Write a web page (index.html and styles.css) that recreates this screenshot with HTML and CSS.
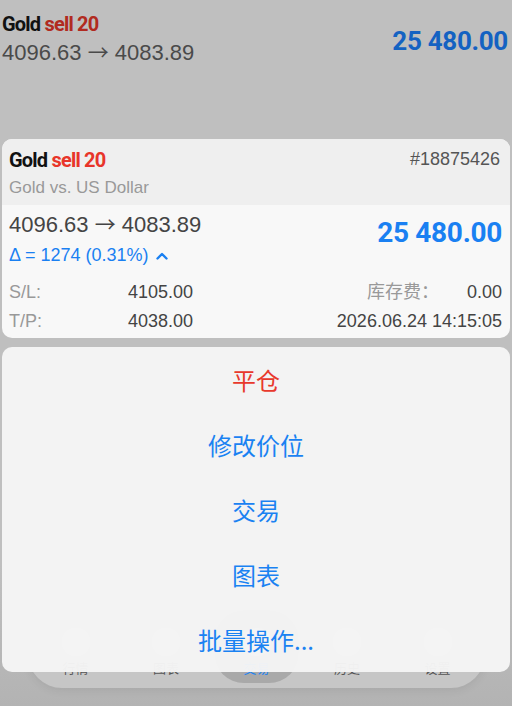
FILE: index.html
```html
<!DOCTYPE html>
<html lang="zh">
<head>
    <meta charset="UTF-8">
    <meta name="viewport" content="width=device-width, initial-scale=1.0">
    <title>Gold sell 20</title>
    <link rel="stylesheet" href="styles.css">
</head>
<body>

    <div class="screen">
        <!-- строка позиции под затемнением -->
        <div class="top-row">
            <div>
                <div class="symbol"><span class="sym-name">Gold</span> <span class="sell dim">sell 20</span></div>
                <div class="prices dim-text">4096.63 <span class="arrow">→</span> 4083.89</div>
            </div>
            <div class="profit top-profit">25 480.00</div>
        </div>

        <!-- выбранная позиция -->
        <div class="card">
            <div class="card-head">
                <div>
                    <div class="symbol"><span class="sym-name">Gold</span> <span class="sell">sell 20</span></div>
                    <div class="desc">Gold vs. US Dollar</div>
                </div>
                <div class="ticket">#18875426</div>
            </div>
            <div class="card-body">
                <div class="main-row">
                    <div>
                        <div class="prices">4096.63 <span class="arrow">→</span> 4083.89</div>
                        <div class="delta">Δ = 1274 (0.31%)
                            <svg class="chevron" width="12" height="8" viewBox="0 0 12 8"><path d="M1.5 6.5 L6 2 L10.5 6.5" fill="none" stroke="#1a80f2" stroke-width="2.4" stroke-linecap="round" stroke-linejoin="round"/></svg>
                        </div>
                    </div>
                    <div class="profit">25 480.00</div>
                </div>
                <div class="details">
                    <span class="label">S/L:</span>
                    <span class="value">4105.00</span>
                    <span class="label right">库存费：</span>
                    <span class="value right">0.00</span>
                    <span class="label">T/P:</span>
                    <span class="value">4038.00</span>
                    <span class="value right wide">2026.06.24 14:15:05</span>
                </div>
            </div>
        </div>

        <!-- меню действий -->
        <div class="sheet">
            <button class="action red">平仓</button>
            <button class="action">修改价位</button>
            <button class="action">交易</button>
            <button class="action">图表</button>
            <button class="action">批量操作...</button>
        </div>

        <!-- нижняя панель за меню -->
        <div class="tabbar">
            <div class="tab"><i></i><span>行情</span></div>
            <div class="tab"><i></i><span>图表</span></div>
            <div class="tab active"><i></i><span>交易</span></div>
            <div class="tab"><i></i><span>历史</span></div>
            <div class="tab"><i></i><span>设置</span></div>
        </div>
    </div>

</body>
</html>
```

FILE: styles.css
```css
body {
    margin: 0;
    padding: 0;
    font-family: "Liberation Sans", Arial, "Noto Sans CJK SC", sans-serif;
}
.screen {
    position: relative;
    width: 512px;
    height: 706px;
    overflow: hidden;
    background: linear-gradient(#bfbfbf 0%, #bfbfbf 80%, #b3b3b3 100%);
}
.top-row {
    display: flex;
    justify-content: space-between;
    padding: 12px 4px 0 2px;
    height: 127px;
    box-sizing: border-box;
}
.symbol {
    font-family: Roboto, sans-serif;
    font-weight: bold;
    font-size: 20px;
    letter-spacing: -0.8px;
    line-height: 24px;
    color: #111;
}
.sell {
    color: #e8352a;
}
.sell.dim {
    color: #b12a20;
}
.prices {
    font-size: 22px;
    line-height: 30px;
    color: #444;
}
.arrow {
    font-family: "Noto Sans CJK SC", sans-serif;
    font-size: 21px;
    line-height: 20px;
}
.dim-text {
    color: #4a4a4a;
    margin-top: 2px;
}
.profit {
    font-family: Roboto, sans-serif;
    font-weight: bold;
    font-size: 28px;
    letter-spacing: -0.3px;
    color: #1a80f2;
}
.top-profit {
    font-size: 26px;
    color: #1462c2;
    margin-top: 14px;
}
.card {
    margin: 12px 2px 0 2px;
    border-radius: 10px;
    overflow: hidden;
    background-color: #f8f8f8;
}
.card-head {
    display: flex;
    justify-content: space-between;
    background-color: #efefef;
    padding: 9px 10px 0 7px;
    height: 66px;
    box-sizing: border-box;
}
.desc {
    font-size: 17px;
    line-height: 22px;
    margin-top: 5px;
    color: #999;
}
.ticket {
    font-size: 18px;
    line-height: 22px;
    color: #555;
}
.card-body {
    padding: 5px 8px 2px 7px;
}
.main-row {
    display: flex;
    justify-content: space-between;
}
.main-row .profit {
    margin-top: 6px;
}
.delta {
    font-size: 18px;
    line-height: 24px;
    margin-top: 3px;
    color: #1a80f2;
}
.chevron {
    margin-left: 2px;
    vertical-align: 1px;
}
.details {
    display: grid;
    grid-template-columns: 119px auto 1fr auto;
    column-gap: 0;
    font-size: 18px;
    line-height: 29px;
    margin-top: 11px;
}
.label {
    color: #999;
}
.value {
    color: #444;
}
.right {
    text-align: right;
}
.label.right {
    padding-right: 28px;
}
.wide {
    grid-column: 3 / 5;
}
.sheet {
    position: relative;
    z-index: 2;
    margin: 9px 2px 0 2px;
    border-radius: 10px;
    background-color: rgba(245, 245, 245, 0.97);
    display: flex;
    flex-direction: column;
}
.action {
    height: 65px;
    border: none;
    background: none;
    font-family: "Noto Sans CJK SC", "Liberation Sans", sans-serif;
    font-size: 24px;
    color: #1a82f2;
    cursor: pointer;
    padding: 0;
}
.action.red {
    color: #e8392c;
}
.tabbar {
    position: absolute;
    left: 28px;
    right: 27px;
    top: 610px;
    height: 78px;
    border-radius: 34px;
    background-color: #c6c6c6;
    box-shadow: 0 2px 10px rgba(0, 0, 0, 0.08);
    display: flex;
    justify-content: space-between;
    padding: 0 5px;
    box-sizing: border-box;
}
.tab {
    width: 85px;
    display: flex;
    flex-direction: column;
    align-items: center;
    padding-top: 18px;
    box-sizing: border-box;
    border-radius: 30px;
}
.tab i {
    width: 28px;
    height: 28px;
    border-radius: 50%;
    background-color: #d0d0d0;
}
.tab span {
    font-family: "Noto Sans CJK SC", sans-serif;
    font-size: 13px;
    line-height: 16px;
    margin-top: 4px;
    color: #555;
}
.tab.active {
    background-color: #a9a9a9;
    height: 73px;
}
.tab.active span {
    color: #1a82f2;
}
```
